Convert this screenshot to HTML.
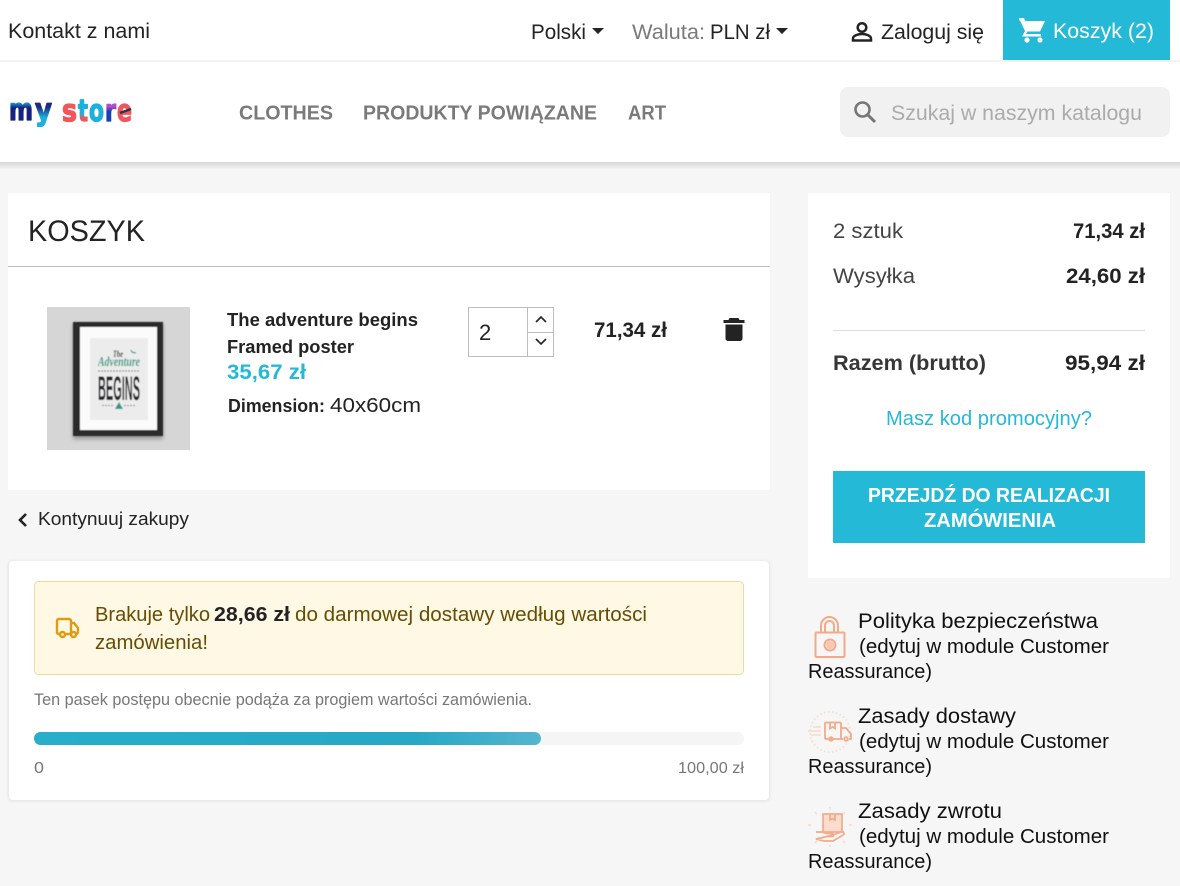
<!DOCTYPE html>
<html lang="pl"><head><meta charset="utf-8"><title>Koszyk</title>
<style>
html,body{margin:0;padding:0;width:1180px;height:886px;overflow:hidden;background:#f6f6f6}
svg{display:block}
text{font-family:"Liberation Sans",sans-serif;font-size:21px;fill:#232323;white-space:pre}
.b{font-weight:700}
.g{fill:#7a7a7a}
.m{font-size:20px}
.s{font-size:17px}
.l{font-family:"DejaVu Sans",sans-serif;font-size:30px;font-weight:700;stroke-width:1.300px;stroke-linejoin:round}
</style></head><body>
<svg width="1180" height="886" viewBox="0 0 1180 886" xmlns="http://www.w3.org/2000/svg">
<defs>
<filter id="sh" x="-5%" y="-50%" width="110%" height="200%"><feGaussianBlur stdDeviation="3.500"/></filter>
<filter id="sh2" x="-5%" y="-5%" width="110%" height="110%"><feGaussianBlur stdDeviation="1.500"/></filter>
<filter id="fr" x="-20%" y="-20%" width="140%" height="140%"><feGaussianBlur stdDeviation="2"/></filter>
<filter id="soft" x="-5%" y="-5%" width="110%" height="110%"><feGaussianBlur stdDeviation=".6"/></filter>
<filter id="lg" x="-5%" y="-5%" width="110%" height="110%"><feGaussianBlur stdDeviation=".35"/></filter>
<linearGradient id="pg" x1="0" x2="1" y1="0" y2="0"><stop offset="0" stop-color="#27aecb"/><stop offset=".75" stop-color="#26a8c6"/><stop offset="1" stop-color="#55b5cf"/></linearGradient>
<linearGradient id="lm" x1="0" x2="0" y1="0" y2="1"><stop offset=".25" stop-color="#22b5dc"/><stop offset=".42" stop-color="#16237f"/></linearGradient>
<linearGradient id="ly" x1="0" x2="0" y1="0" y2="1"><stop offset=".4" stop-color="#1b2a80"/><stop offset=".7" stop-color="#1fb0dc"/></linearGradient>
<linearGradient id="lt" x1="0" x2="0" y1="0" y2="1"><stop offset=".55" stop-color="#1fb0dc"/><stop offset=".7" stop-color="#f2545b"/></linearGradient>
<linearGradient id="lr" x1="0" x2="0" y1="0" y2="1"><stop offset=".35" stop-color="#b84cc8"/><stop offset=".5" stop-color="#1740b8"/></linearGradient>
</defs>
<rect width="1180" height="886" fill="#f6f6f6"/>
<!-- header -->
<rect x="-10" y="158" width="1200" height="7" fill="#000" opacity=".17" filter="url(#sh)"/>
<rect width="1180" height="162" fill="#fff"/>
<rect y="60" width="1180" height="2" fill="#f3f3f3"/>
<text x="8" y="38" textLength="142" lengthAdjust="spacingAndGlyphs">Kontakt z nami</text>
<text x="531" y="39" textLength="55" lengthAdjust="spacingAndGlyphs">Polski</text>
<path d="M592 28h12l-6 6z" fill="#232323"/>
<text x="632" y="39" textLength="73" lengthAdjust="spacingAndGlyphs" class="g">Waluta:</text>
<text x="710" y="39" textLength="60" lengthAdjust="spacingAndGlyphs">PLN zł</text>
<path d="M776 28h12l-6 6z" fill="#232323"/>
<g fill="none" stroke="#232323" stroke-width="2.500"><circle cx="862" cy="27.500" r="4.300"/><path d="M853 40.500v-2c0-3 5.500-4.500 9-4.500s9 1.500 9 4.500v2z"/></g>
<text x="881" y="39" textLength="103" lengthAdjust="spacingAndGlyphs">Zaloguj się</text>
<rect x="1003" y="0" width="167" height="60" fill="#24b9d7"/>
<path d="M1019 18h5l1.300 3h19.700l-5 10.500h-12.500l-1.500 2.500h15v2.500h-19l3-5.500-5-10.500h-1z" fill="#fff"/><circle cx="1027" cy="40" r="2.600" fill="#fff"/><circle cx="1040" cy="40" r="2.600" fill="#fff"/>
<text x="1053" y="38" textLength="101" lengthAdjust="spacingAndGlyphs" style="fill:#fff">Koszyk (2)</text>
<!-- logo -->
<g filter="url(#lg)">
<text x="9" y="120" textLength="24" lengthAdjust="spacingAndGlyphs" class="l" style="fill:url(#lm);stroke:url(#lm)">m</text>
<text x="35" y="120" textLength="17" lengthAdjust="spacingAndGlyphs" class="l" style="fill:url(#ly);stroke:url(#ly)">y</text>
<text x="62" y="121" textLength="15" lengthAdjust="spacingAndGlyphs" class="l" style="fill:#f2545b;stroke:#f2545b">s</text>
<text x="78" y="121" textLength="10" lengthAdjust="spacingAndGlyphs" class="l" style="fill:url(#lt);stroke:url(#lt)">t</text>
<text x="89" y="121" textLength="15" lengthAdjust="spacingAndGlyphs" class="l" style="fill:#1fb0dc;stroke:#1fb0dc">o</text>
<text x="105" y="121" textLength="11" lengthAdjust="spacingAndGlyphs" class="l" style="fill:url(#lr);stroke:url(#lr)">r</text>
<text x="117" y="121" textLength="15" lengthAdjust="spacingAndGlyphs" class="l" style="fill:#f2545b;stroke:#f2545b">e</text>
<path d="M120 113l11-4" stroke="#223a4a" stroke-width="2.500"/>
</g>
<!-- nav -->
<text x="239" y="119.500" textLength="94" lengthAdjust="spacingAndGlyphs" class="b g m">CLOTHES</text>
<text x="363" y="119.500" textLength="234" lengthAdjust="spacingAndGlyphs" class="b g m">PRODUKTY POWIĄZANE</text>
<text x="628" y="119.500" textLength="38" lengthAdjust="spacingAndGlyphs" class="b g m">ART</text>
<rect x="840" y="87" width="330" height="50" rx="8" fill="#f1f1f1"/>
<g fill="none" stroke="#767676" stroke-width="2.600"><circle cx="862.500" cy="109.500" r="7"/><path d="M867.800 114.800l7.200 7.200" stroke-width="3"/></g>
<text x="891" y="120" textLength="251" lengthAdjust="spacingAndGlyphs" style="fill:#ababab">Szukaj w naszym katalogu</text>
<!-- cart card -->
<rect x="8" y="193" width="762" height="297" fill="#fff"/>
<text x="28" y="241" textLength="117" lengthAdjust="spacingAndGlyphs" style="font-size:30px">KOSZYK</text>
<rect x="8" y="266" width="762" height="1" fill="#bdbdbd"/>
<!-- product image -->
<rect x="47" y="307" width="143" height="143" fill="#d6d6d6"/>
<rect x="73" y="324" width="90" height="115" fill="#000" opacity=".3" filter="url(#fr)"/>
<g filter="url(#soft)">
<rect x="73" y="322" width="90" height="114" fill="#2a2a2a"/>
<rect x="80" y="327" width="77" height="103" fill="#fbfbfb"/>
<rect x="90" y="338" width="58" height="82" fill="#ececec"/>
<text x="113" y="357" textLength="10" lengthAdjust="spacingAndGlyphs" style="font-family:'Liberation Serif',serif;font-size:9px;font-style:italic;font-weight:700">The</text>
<text x="98" y="366" textLength="42" lengthAdjust="spacingAndGlyphs" style="font-family:'Liberation Serif',serif;font-size:14px;font-style:italic;font-weight:700;fill:#2f9a85">Adventure</text>
<path d="M131 350a3.500 3.500 0 0 0 5 2.500a4 4 0 0 1-5-2.500z" fill="#2f9a85" stroke="#2f9a85"/>
<path d="M98 371h42" stroke="#777" stroke-width="1" stroke-dasharray="2 1"/>
<text x="98" y="400" textLength="42" lengthAdjust="spacingAndGlyphs" style="font-size:34px;font-weight:700;fill:#26282b">BEGINS</text>
<path d="M115 409l4-7 4 7z" fill="#2f9a85"/><path d="M102 405.500h12M124 405.500h12" stroke="#888" stroke-width="1" stroke-dasharray="2 1"/>
</g>
<!-- product info -->
<text x="227" y="326" textLength="191" lengthAdjust="spacingAndGlyphs" class="b" style="font-size:18.500px">The adventure begins</text>
<text x="227" y="353" textLength="127" lengthAdjust="spacingAndGlyphs" class="b" style="font-size:18.500px">Framed poster</text>
<text x="227" y="379" textLength="79" lengthAdjust="spacingAndGlyphs" class="b" style="fill:#24b9d7">35,67 zł</text>
<text x="228" y="412" textLength="97" lengthAdjust="spacingAndGlyphs" class="b" style="font-size:18px">Dimension:</text>
<text x="330" y="412" textLength="91" lengthAdjust="spacingAndGlyphs" style="font-size:20px">40x60cm</text>
<!-- qty -->
<rect x="468.500" y="307.500" width="85" height="49" fill="#fff" stroke="#bdbdbd"/>
<path d="M527.500 307v50M527 332.500h27" stroke="#bdbdbd" fill="none"/>
<text x="479" y="340" style="font-size:22px">2</text>
<path d="M536 322l5-5 5 5M536 339l5 5 5-5" fill="none" stroke="#232323" stroke-width="1.600"/>
<text x="594" y="337" textLength="73" lengthAdjust="spacingAndGlyphs" class="b">71,34 zł</text>
<path d="M729.500 318h9l1 2h5v3h-21v-3h5zM725.500 324.500h17v14a2.500 2.500 0 0 1-2.500 2.500h-12a2.500 2.500 0 0 1-2.500-2.500z" fill="#232323"/>
<!-- continue -->
<path d="M26 514l-6 6 6 6" fill="none" stroke="#232323" stroke-width="2.600"/>
<text x="38" y="525" textLength="151" lengthAdjust="spacingAndGlyphs" style="font-size:18.500px">Kontynuuj zakupy</text>
<!-- free shipping card -->
<rect x="8" y="561" width="762" height="240" rx="4" fill="#000" opacity=".08" filter="url(#sh2)"/>
<rect x="9" y="561" width="760" height="239" rx="4" fill="#fff"/>
<rect x="34.500" y="581.500" width="709" height="93" rx="4" fill="#fff8e4" stroke="#eeda9c"/>
<g fill="none" stroke="#e09b0f" stroke-width="2.400"><path d="M60 634h-1.500a2 2 0 0 1-1.500-2v-11a2 2 0 0 1 2-2h10a2 2 0 0 1 2 2v13h-5M71 623h3l4 5v4a2 2 0 0 1-2 2h-.5M71 634h.5"/><circle cx="62.500" cy="634.500" r="2.500"/><circle cx="73.500" cy="634.500" r="2.500"/></g>
<text x="95" y="621" textLength="115" lengthAdjust="spacingAndGlyphs" style="fill:#664d03;font-size:20px">Brakuje tylko</text>
<text x="214" y="621" textLength="76" lengthAdjust="spacingAndGlyphs" class="b" style="font-size:20px">28,66 zł</text>
<text x="295" y="621" textLength="352" lengthAdjust="spacingAndGlyphs" style="fill:#664d03;font-size:20px">do darmowej dostawy według wartości</text>
<text x="95" y="649" textLength="113" lengthAdjust="spacingAndGlyphs" style="fill:#664d03;font-size:20px">zamówienia!</text>
<text x="34" y="705" textLength="498" lengthAdjust="spacingAndGlyphs" style="font-size:16.500px;fill:#777">Ten pasek postępu obecnie podąża za progiem wartości zamówienia.</text>
<rect x="34" y="732" width="710" height="13" rx="6.500" fill="#f5f5f5"/>
<rect x="34" y="732" width="507" height="13" rx="6.500" fill="url(#pg)"/>
<text x="34" y="773" textLength="10" lengthAdjust="spacingAndGlyphs" style="font-size:16px;fill:#777">0</text>
<text x="678" y="773" textLength="66" lengthAdjust="spacingAndGlyphs" style="font-size:16px;fill:#777">100,00 zł</text>
<!-- summary -->
<rect x="808" y="193" width="362" height="385" fill="#fff"/>
<text x="833" y="238" textLength="70" lengthAdjust="spacingAndGlyphs" style="fill:#444">2 sztuk</text>
<text x="1073" y="238" textLength="72" lengthAdjust="spacingAndGlyphs" class="b">71,34 zł</text>
<text x="833" y="283" textLength="82" lengthAdjust="spacingAndGlyphs" style="fill:#444">Wysyłka</text>
<text x="1066" y="283" textLength="79" lengthAdjust="spacingAndGlyphs" class="b">24,60 zł</text>
<rect x="833" y="330" width="312" height="1" fill="#dcdcdc"/>
<text x="833" y="370" textLength="153" lengthAdjust="spacingAndGlyphs" class="b" style="fill:#363636">Razem (brutto)</text>
<text x="1065" y="370" textLength="80" lengthAdjust="spacingAndGlyphs" class="b">95,94 zł</text>
<text x="886" y="425" textLength="206" lengthAdjust="spacingAndGlyphs" style="fill:#24b9d7;font-size:20px">Masz kod promocyjny?</text>
<rect x="833" y="471" width="312" height="72" fill="#24b9d7"/>
<text x="868" y="502" textLength="242" lengthAdjust="spacingAndGlyphs" class="b m" style="fill:#fff">PRZEJDŹ DO REALIZACJI</text>
<text x="924" y="527" textLength="132" lengthAdjust="spacingAndGlyphs" class="b m" style="fill:#fff">ZAMÓWIENIA</text>
<!-- reassurance -->
<g fill="none" stroke="#f2ab8a" stroke-width="2">
<path d="M821 632v-6.500a8.500 8.500 0 0 1 17 0v6.500M825 632v-6.500a4.500 4.500 0 0 1 9 0v6.500"/>
<rect x="815.500" y="632.500" width="29" height="24.500" rx="1"/>
<circle cx="830" cy="645" r="5.500"/>
</g><circle cx="830" cy="645" r="4" fill="#f7c6ae"/>
<g fill="none" stroke="#f2ab8a" stroke-width="1.800">
<circle cx="830" cy="732" r="20" stroke="#f8ddd0" stroke-dasharray="1.500 2.500"/>
<path d="M808 731h13M811 735h10M813 727h8" stroke="#f8ddd0"/>
<rect x="825" y="722.500" width="16" height="16.500" rx="1"/>
<path d="M830 722.500v6l2.500-1.500 2.500 1.500v-6M841 728h5l5 6v5h-2M841 739h2"/>
<circle cx="831" cy="739" r="1.800"/><circle cx="846" cy="739" r="1.800"/>
</g>
<g fill="none" stroke="#f2ab8a" stroke-width="1.700">
<rect x="823" y="814" width="19" height="18" fill="#fbdccd"/>
<path d="M830 814v6l2.500-1.500 2.500 1.500v-6"/>
<path d="M816 832h6l5 1.500h5c2 0 2 3 0 3h-5M833 835l8-3c3-1 4 2 2 3l-10 6h-9l-8-2z"/>
<path d="M830 807v3M808 825h3M849 825h3M815 812l2 2M845 812l-2 2M815 843l2-2M845 843l-2-2M830 845v2" stroke="#f8ddd0"/>
</g>
<text x="858" y="628" textLength="240" lengthAdjust="spacingAndGlyphs" style="fill:#111">Polityka bezpieczeństwa</text>
<text x="859" y="653" textLength="250" lengthAdjust="spacingAndGlyphs" style="fill:#111;font-size:20px">(edytuj w module Customer</text>
<text x="808" y="678" textLength="124" lengthAdjust="spacingAndGlyphs" style="fill:#111;font-size:20px">Reassurance)</text>
<text x="858" y="723" textLength="158" lengthAdjust="spacingAndGlyphs" style="fill:#111">Zasady dostawy</text>
<text x="859" y="748" textLength="250" lengthAdjust="spacingAndGlyphs" style="fill:#111;font-size:20px">(edytuj w module Customer</text>
<text x="808" y="773" textLength="124" lengthAdjust="spacingAndGlyphs" style="fill:#111;font-size:20px">Reassurance)</text>
<text x="858" y="818" textLength="144" lengthAdjust="spacingAndGlyphs" style="fill:#111">Zasady zwrotu</text>
<text x="859" y="843" textLength="250" lengthAdjust="spacingAndGlyphs" style="fill:#111;font-size:20px">(edytuj w module Customer</text>
<text x="808" y="868" textLength="124" lengthAdjust="spacingAndGlyphs" style="fill:#111;font-size:20px">Reassurance)</text>
</svg>
</body></html>
